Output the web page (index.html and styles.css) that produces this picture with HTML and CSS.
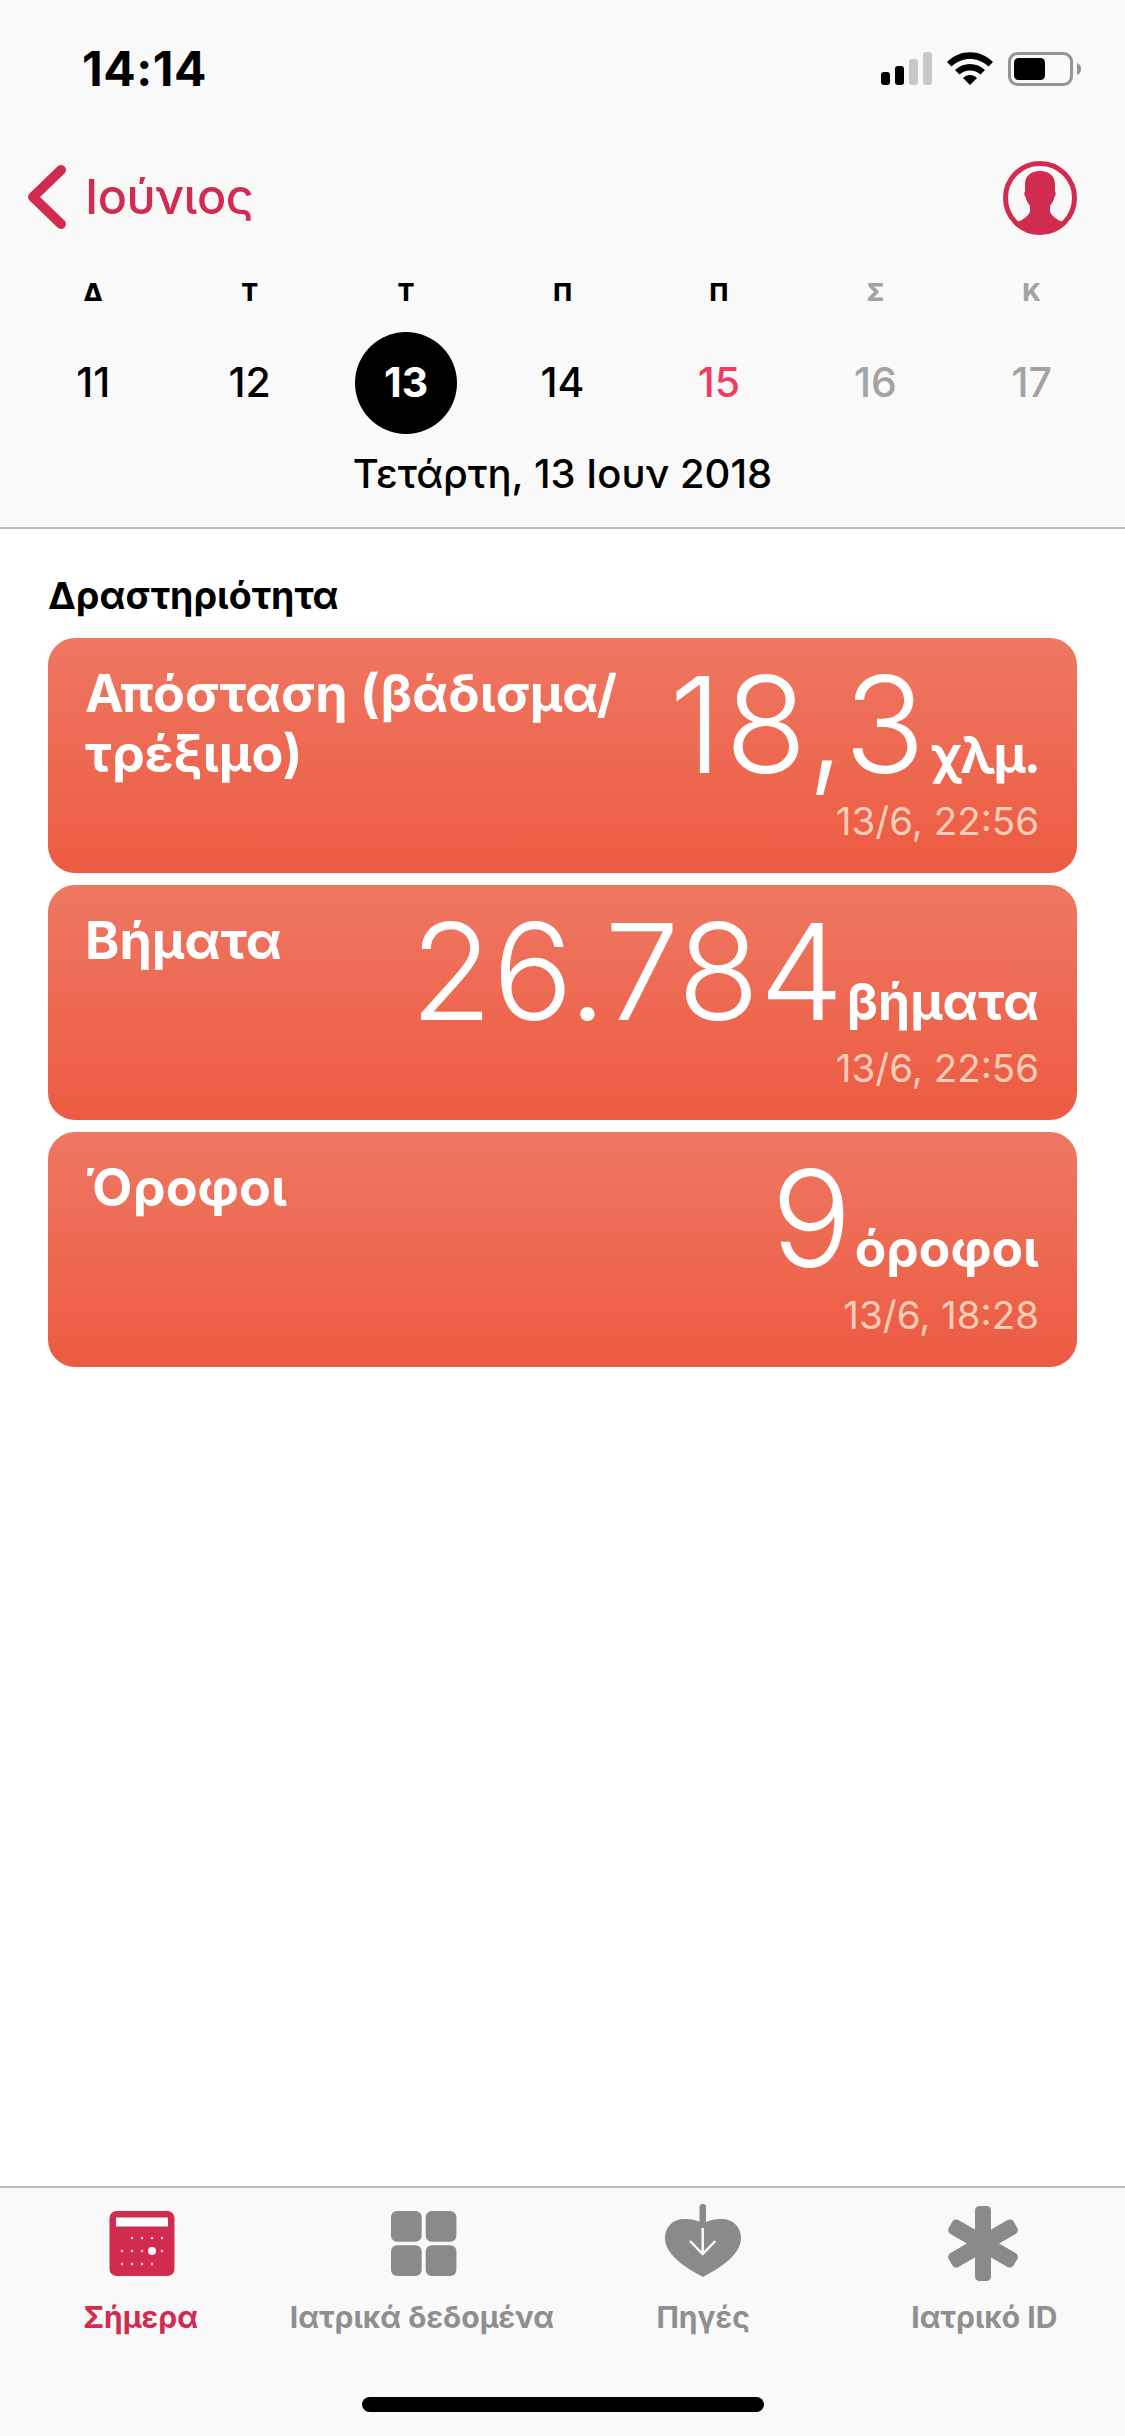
FILE: index.html
```html
<!DOCTYPE html>
<html lang="el">
<head>
<meta charset="utf-8">
<title>Σήμερα</title>
<link rel="stylesheet" href="styles.css">
</head>
<body>
<div class="app">
  <header class="top">
    <div class="status">
      <span class="clock">14:14</span>
      <div class="status-icons">
        <svg class="ic-signal" width="51" height="33" viewBox="0 0 51 33"><rect x="0" y="20" width="9" height="13" rx="3" fill="#000"/><rect x="14" y="14" width="9" height="19" rx="3" fill="#000"/><rect x="28" y="7" width="9" height="26" rx="3" fill="#c8c8c8"/><rect x="42" y="0" width="9" height="33" rx="3" fill="#c8c8c8"/></svg>
        <svg class="ic-wifi" width="46" height="33" viewBox="0 0 46 33"><path d="M0 10 C13 -3 33 -3 46 10 L41.500 14.500 C31 4.500 15 4.500 4.500 14.500 Z" fill="#000"/><path d="M8 18 C16 10 30 10 38 18 L33.500 22.500 C27.500 17 18.500 17 12.500 22.500 Z" fill="#000"/><path d="M16 26 C20 22 26 22 30 26 L23 33 Z" fill="#000"/></svg>
        <svg class="ic-batt" width="73" height="34" viewBox="0 0 73 34"><rect x="1.500" y="1.500" width="62" height="31" rx="8" fill="none" stroke="#959595" stroke-width="3"/><rect x="6" y="6" width="31" height="22" rx="4.500" fill="#000"/><path d="M69 11 C72 12 73 14 73 17 C73 20 72 22 69 23 Z" fill="#959595"/></svg>
      </div>
    </div>
    <nav class="nav">
      <a class="back">
        <svg class="chev" width="40" height="66" viewBox="0 0 40 66"><path d="M34 6 L6 33 L34 60" fill="none" stroke="#d12c4f" stroke-width="10" stroke-linecap="round" stroke-linejoin="round"/></svg>
        <span class="month">Ιούνιος</span>
      </a>
      <svg class="avatar" width="74" height="74" viewBox="0 0 74 74"><defs><clipPath id="av"><circle cx="37" cy="37" r="36"/></clipPath></defs><circle cx="37" cy="37" r="34.500" fill="none" stroke="#d12c4f" stroke-width="5"/><path clip-path="url(#av)" d="M37 10 C46 10 52 15 52 23 L52 31 C53 31 53 34 51.500 36 C50.500 40 49 42 47 45 L47 51 C49 55 53 58 57 60 L72 64 L72 76 L2 76 L2 64 L17 60 C21 58 25 55 27 51 L27 45 C25 42 23.500 40 22.500 36 C21 34 21 31 22 31 L22 23 C22 15 28 10 37 10 Z" fill="#d12c4f"/></svg>
    </nav>
    <div class="week">
      <span class="wd">Δ</span><span class="wd">Τ</span><span class="wd">Τ</span><span class="wd">Π</span><span class="wd">Π</span><span class="wd off">Σ</span><span class="wd off">Κ</span>
      <span class="day">11</span><span class="day">12</span><span class="day sel">13</span><span class="day">14</span><span class="day hot">15</span><span class="day off">16</span><span class="day off">17</span>
    </div>
    <div class="fulldate">Τετάρτη, 13 Ιουν 2018</div>
  </header>

  <main class="content">
    <h2 class="section">Δραστηριότητα</h2>
    <div class="cards">
      <article class="card">
        <div class="card-main">
          <h3 class="label">Απόσταση (βάδισμα/<br>τρέξιμο)</h3>
          <div class="value"><span class="num wide">18,3</span><span class="unit tight">χλμ.</span></div>
        </div>
        <div class="when">13/6, 22:56</div>
      </article>
      <article class="card">
        <div class="card-main">
          <h3 class="label">Βήματα</h3>
          <div class="value"><span class="num">26.784</span><span class="unit">βήματα</span></div>
        </div>
        <div class="when">13/6, 22:56</div>
      </article>
      <article class="card">
        <div class="card-main">
          <h3 class="label">Όροφοι</h3>
          <div class="value"><span class="num">9</span><span class="unit">όροφοι</span></div>
        </div>
        <div class="when">13/6, 18:28</div>
      </article>
    </div>
  </main>

  <footer class="tabs">
    <div class="tab active">
      <svg class="tab-ic" width="78" height="78" viewBox="0 0 78 78">
        <rect x="7.500" y="7" width="65" height="65" rx="7" fill="#d12c4f"/>
        <rect x="14" y="13.500" width="52" height="9" fill="#fff"/>
        <g fill="#fff" opacity=".85"><circle cx="30" cy="34" r="1.200"/><circle cx="40" cy="34" r="1.200"/><circle cx="50" cy="34" r="1.200"/><circle cx="60" cy="34" r="1.200"/><circle cx="20" cy="47" r="1.200"/><circle cx="30" cy="47" r="1.200"/><circle cx="40" cy="47" r="1.200"/><circle cx="60" cy="47" r="1.200"/><circle cx="20" cy="60" r="1.200"/><circle cx="30" cy="60" r="1.200"/><circle cx="40" cy="60" r="1.200"/><circle cx="50" cy="60" r="1.200"/></g>
        <circle cx="50" cy="47" r="4" fill="#fff"/>
      </svg>
      <span class="tab-t">Σήμερα</span>
    </div>
    <div class="tab">
      <svg class="tab-ic" width="78" height="78" viewBox="0 0 78 78" fill="#8a8a8a">
        <rect x="8" y="7" width="30.700" height="30.700" rx="6"/><rect x="42.700" y="7" width="30.700" height="30.700" rx="6"/><rect x="8" y="41.300" width="30.700" height="30.700" rx="6"/><rect x="42.700" y="41.300" width="30.700" height="30.700" rx="6"/>
      </svg>
      <span class="tab-t">Ιατρικά δεδομένα</span>
    </div>
    <div class="tab">
      <svg class="tab-ic" width="78" height="78" viewBox="0 0 78 78">
        <path d="M39 20 C34 16 27 15 20 15 C9 15 1 23 1 34 C1 50 20 63 39 73 C58 63 77 50 77 34 C77 23 69 15 58 15 C51 15 44 16 39 20 Z" fill="#8a8a8a"/>
        <rect x="35.500" y="0" width="6.500" height="24" rx="3" fill="#8a8a8a"/>
        <path d="M38.700 24 L38.700 50 M26 37 L38.700 50 L51.400 37" fill="none" stroke="#fafafa" stroke-width="2.500"/>
      </svg>
      <span class="tab-t">Πηγές</span>
    </div>
    <div class="tab">
      <svg class="tab-ic" width="78" height="78" viewBox="0 0 78 78">
        <g fill="#8a8a8a"><rect x="30" y="2" width="16" height="75" rx="4.500"/><rect x="30" y="2" width="16" height="75" rx="4.500" transform="rotate(60 38 39.500)"/><rect x="30" y="2" width="16" height="75" rx="4.500" transform="rotate(-60 38 39.500)"/></g>
      </svg>
      <span class="tab-t">Ιατρικό ID</span>
    </div>
    <div class="home"></div>
  </footer>
</div>
</body>
</html>
```

FILE: styles.css
```css
* { box-sizing: border-box; }
html, body { margin: 0; padding: 0; background: #fff; }
body { font-family: Inter, "Liberation Sans", sans-serif; color: #000; }
.app { width: 1125px; height: 2436px; display: flex; flex-direction: column; overflow: hidden; }

.top { height: 529px; background: #f9f9f9; border-bottom: 2px solid #bdbdbd; }
.status { height: 90px; padding: 48px 44px 0 82px; display: flex; justify-content: space-between; align-items: flex-start; }
.clock { font-size: 48px; font-weight: 700; line-height: 44px; margin-top: -1px; letter-spacing: 0.5px; }
.status-icons { display: flex; align-items: flex-start; gap: 15px; padding-top: 4px; }

.nav { height: 117px; margin-top: 71px; padding: 0 48px 0 27px; display: flex; justify-content: space-between; align-items: flex-start; }
.back { display: flex; align-items: center; gap: 18px; margin-top: 3px; }
.month { font-size: 48.500px; font-weight: 500; color: #d12c4f; line-height: 66px; letter-spacing: -0.5px; }

.week { margin: 0 15px; display: grid; grid-template-columns: repeat(7, 1fr); justify-items: center; }
.wd { font-size: 25px; font-weight: 800; height: 54px; line-height: 28px; }
.day { width: 102px; height: 102px; border-radius: 50%; display: flex; align-items: center; justify-content: center; font-size: 41px; font-weight: 500; padding-bottom: 2px; }
.sel { background: #000; color: #fff; font-weight: 700; }
.hot { color: #ee3d60; }
.off { color: #a3a3a3; }
.fulldate { text-align: center; font-size: 40px; font-weight: 500; line-height: 46px; margin-top: 17px; }

.content { flex: 1; padding: 0 48px; background: #fff; }
.section { margin: 46px 0 21px; font-size: 37.500px; font-weight: 700; line-height: 42px; }
.cards { display: flex; flex-direction: column; gap: 12px; }
.card { height: 235px; border-radius: 27px; padding: 26px 38px 0 37px; color: #fff; background: linear-gradient(#ef7762, #ec5b41); display: flex; flex-direction: column; }
.card-main { display: flex; justify-content: space-between; align-items: flex-start; height: 135px; }
.label { margin: 0; font-size: 52px; font-weight: 700; line-height: 60px; }
.value { display: flex; align-items: baseline; gap: 3px; margin-top: -15px; }
.num { font-size: 134px; font-weight: 300; line-height: 150px; }
.wide { letter-spacing: 3px; }
.unit { font-size: 51.500px; font-weight: 700; }
.tight { letter-spacing: -2px; }
.when { text-align: right; font-size: 38.500px; font-weight: 400; line-height: 44px; color: #fdcdb9; }

.tabs { height: 250px; background: #f9f9f9; border-top: 2px solid #bdbdbd; display: grid; grid-template-columns: repeat(4, 1fr); grid-template-rows: auto 1fr; justify-items: center; align-content: start; padding-top: 16px; }
.tab { display: flex; flex-direction: column; align-items: center; }
.tab-ic { display: block; }
.tab-t { margin-top: 16px; font-size: 30px; font-weight: 700; line-height: 38px; color: #8f8f8f; white-space: nowrap; }
.active .tab-t { color: #d12c4f; }
.home { grid-column: 1 / -1; width: 402px; height: 15px; border-radius: 8px; background: #000; margin-top: 61px; }
```
